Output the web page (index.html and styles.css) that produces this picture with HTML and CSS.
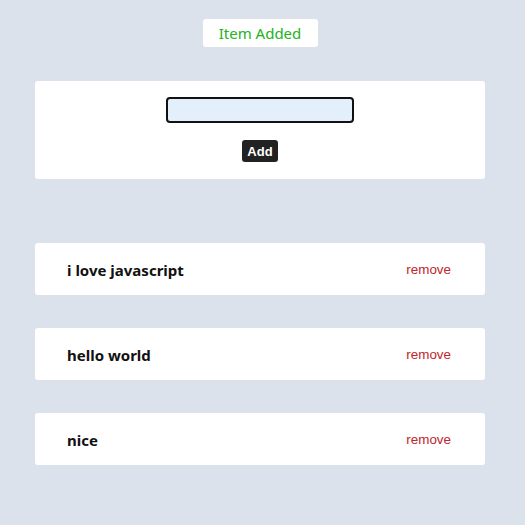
FILE: index.html
```html
<!DOCTYPE html>
<html>
<head>
<meta charset="utf-8">
<link rel="stylesheet" href="styles.css">
</head>
<body>
<div class="page">
  <div class="toast-row"><div class="toast">Item Added</div></div>
  <div class="card form">
    <input class="field" type="text">
    <button class="add">Add</button>
  </div>
  <ul class="list">
    <li class="item"><span class="name">i love javascript</span><a class="remove">remove</a></li>
    <li class="item"><span class="name">hello world</span><a class="remove">remove</a></li>
    <li class="item"><span class="name">nice</span><a class="remove">remove</a></li>
  </ul>
</div>
</body>
</html>
```

FILE: styles.css
```css
html, body { margin: 0; padding: 0; }
body { background: #dce2ec; font-family: "Noto Sans", sans-serif; }
.page { width: 450px; margin-left: 35px; padding-top: 19px; }
.toast-row { display: flex; justify-content: center; }
.toast { background: #fff; border-radius: 3px; width: 115px; height: 28px; display: flex; align-items: center; justify-content: center; color: #22b322; font-size: 15px; }
.card { background: #fff; border-radius: 3px; }
.form { margin-top: 34px; height: 98px; box-sizing: border-box; padding-top: 16px; display: flex; flex-direction: column; align-items: center; }
.field { width: 188px; height: 26px; box-sizing: border-box; border: 2px solid #111; border-radius: 4px; background: #e3f0fb; margin: 0; padding: 0 4px; }
.add { margin-top: 17px; width: 36px; height: 22px; background: #222; color: #fff; border: none; border-radius: 3px; font-family: "Liberation Sans", Arial, sans-serif; font-weight: bold; font-size: 13px; padding: 0; }
.list { list-style: none; margin: 64px 0 0; padding: 0; display: flex; flex-direction: column; gap: 33px; }
.item { background: #fff; border-radius: 3px; height: 52px; display: flex; align-items: center; justify-content: space-between; padding: 0 34px 0 32px; }
.name { font-weight: bold; font-size: 15px; color: #111; padding-top: 2px; }
.remove { font-family: "Liberation Sans", Arial, sans-serif; font-size: 13.4px; color: #c0262b; }
```
